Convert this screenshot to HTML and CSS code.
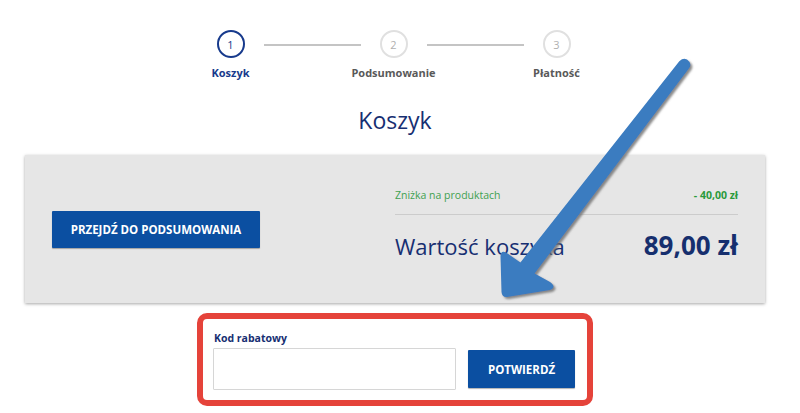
FILE: index.html
```html
<!DOCTYPE html>
<html lang="pl">
<head>
<meta charset="utf-8">
<title>Koszyk</title>
<link rel="stylesheet" href="styles.css">
</head>
<body>
<div class="page">
  <div class="stepper">
    <div class="step active">
      <div class="circle">1</div>
      <div class="step-label">Koszyk</div>
    </div>
    <div class="line"></div>
    <div class="step">
      <div class="circle">2</div>
      <div class="step-label">Podsumowanie</div>
    </div>
    <div class="line"></div>
    <div class="step">
      <div class="circle">3</div>
      <div class="step-label">Płatność</div>
    </div>
  </div>

  <h1 class="title">Koszyk</h1>

  <div class="card">
    <button class="btn btn-summary">PRZEJDŹ DO PODSUMOWANIA</button>
    <div class="totals">
      <div class="discount-row">
        <span>Zniżka na produktach</span>
        <span class="discount-value">- 40,00 zł</span>
      </div>
      <div class="divider"></div>
      <div class="total-row">
        <span>Wartość koszyka</span>
        <span class="total-value">89,00 zł</span>
      </div>
    </div>
  </div>

  <div class="coupon">
    <label class="coupon-label" for="code">Kod rabatowy</label>
    <div class="coupon-row">
      <input id="code" class="coupon-input" type="text">
      <button class="btn btn-confirm">POTWIERDŹ</button>
    </div>
  </div>
</div>

<svg class="annotation" width="800" height="413" viewBox="0 0 800 413" xmlns="http://www.w3.org/2000/svg">
  <defs>
    <filter id="sh" x="-20%" y="-20%" width="140%" height="140%">
      <feDropShadow dx="2" dy="2" stdDeviation="1" flood-color="#6d6d6d" flood-opacity="0.8"/>
    </filter>
  </defs>
  <path filter="url(#sh)" fill="#3a7bc0"
        d="M679.3 61.3 Q685 56 689.5 62 Q691.5 66 688.7 68.7 L534.6 273.5 L550 282 Q557 287 550 290 L507 297 Q502 297.5 501.5 292 L500.5 256 Q501 250 506 252.5 L520.4 262.4 Z"/>
</svg>
</body>
</html>
```

FILE: styles.css
```css
* { box-sizing: border-box; }

html, body {
  margin: 0;
  padding: 0;
  background: #ffffff;
}

body {
  font-family: "Open Sans", "Noto Sans", sans-serif;
  color: #1c2f6e;
  width: 800px;
  height: 413px;
  overflow: hidden;
  position: relative;
}

.page {
  width: 790px;
  display: flex;
  flex-direction: column;
  align-items: center;
}

/* Stepper */
.stepper {
  display: flex;
  align-items: flex-start;
  padding-top: 30px;
  margin-left: -3px;
}

.step {
  width: 28px;
  display: flex;
  flex-direction: column;
  align-items: center;
}

.circle {
  width: 28px;
  height: 28px;
  border-radius: 50%;
  border: 2px solid #e0e0e0;
  color: #b0b0b0;
  font-size: 11px;
  display: flex;
  align-items: center;
  justify-content: center;
}

.step.active .circle {
  border-color: #173a8c;
  color: #173a8c;
}

.step-label {
  margin-top: 8px;
  white-space: nowrap;
  font-size: 11px;
  line-height: 14px;
  font-weight: 700;
  color: #595959;
}

.step.active .step-label {
  color: #173a8c;
}

.line {
  width: 97px;
  height: 2px;
  background: #c4c4c4;
  margin: 14px 19px 0;
}

/* Title */
.title {
  margin: 25px 0 0;
  font-size: 23px;
  line-height: 30px;
  font-weight: 400;
  color: #172f72;
}

/* Card */
.card {
  margin-top: 20px;
  width: 740px;
  height: 148px;
  background: #e6e6e6;
  box-shadow: 0 1px 3px rgba(0, 0, 0, 0.35);
  display: flex;
  align-items: center;
  padding: 0 27px;
}

.btn {
  border: 0;
  background: #0b4fa1;
  color: #ffffff;
  font-family: "Open Sans", "Noto Sans", sans-serif;
  font-weight: 700;
  font-size: 11.5px;
  letter-spacing: 0;
  border-radius: 1px;
  box-shadow: 0 1px 1px rgba(0, 0, 0, 0.3);
  padding: 0;
}

.btn-summary {
  width: 208px;
  height: 37px;
}

.totals {
  margin-left: auto;
  width: 343px;
  align-self: stretch;
  padding-top: 32px;
  display: flex;
  flex-direction: column;
}

.discount-row {
  display: flex;
  justify-content: space-between;
  font-size: 10.5px;
  line-height: 16px;
  color: #3fa150;
}

.discount-value {
  font-weight: 700;
  color: #2a9a3c;
}

.divider {
  margin-top: 11px;
  height: 1px;
  background: #cccccc;
}

.total-row {
  margin-top: 13px;
  display: flex;
  justify-content: space-between;
  align-items: baseline;
  font-size: 22px;
  line-height: 34px;
  color: #172f72;
}

.total-value {
  font-weight: 700;
  font-size: 26px;
  color: #162f6e;
}

/* Coupon */
.coupon {
  margin-top: 10px;
  width: 396px;
  height: 93px;
  border: 6px solid #e5433a;
  border-radius: 10px;
  padding: 12px 12px 10px 10px;
  display: flex;
  flex-direction: column;
}

.coupon-label {
  display: block;
  padding-left: 1px;
  font-size: 10.5px;
  line-height: 14px;
  font-weight: 700;
  color: #172f72;
}

.coupon-row {
  margin-top: 3px;
  display: flex;
  align-items: center;
  gap: 12px;
}

.coupon-input {
  width: 243px;
  height: 42px;
  border: 1px solid #d6d6d6;
  border-radius: 1px;
  background: #ffffff;
  margin: 0;
}

.btn-confirm {
  width: 107px;
  height: 38px;
}

/* Annotation overlay */
.annotation {
  position: absolute;
  left: 0;
  top: 0;
  pointer-events: none;
}
```
